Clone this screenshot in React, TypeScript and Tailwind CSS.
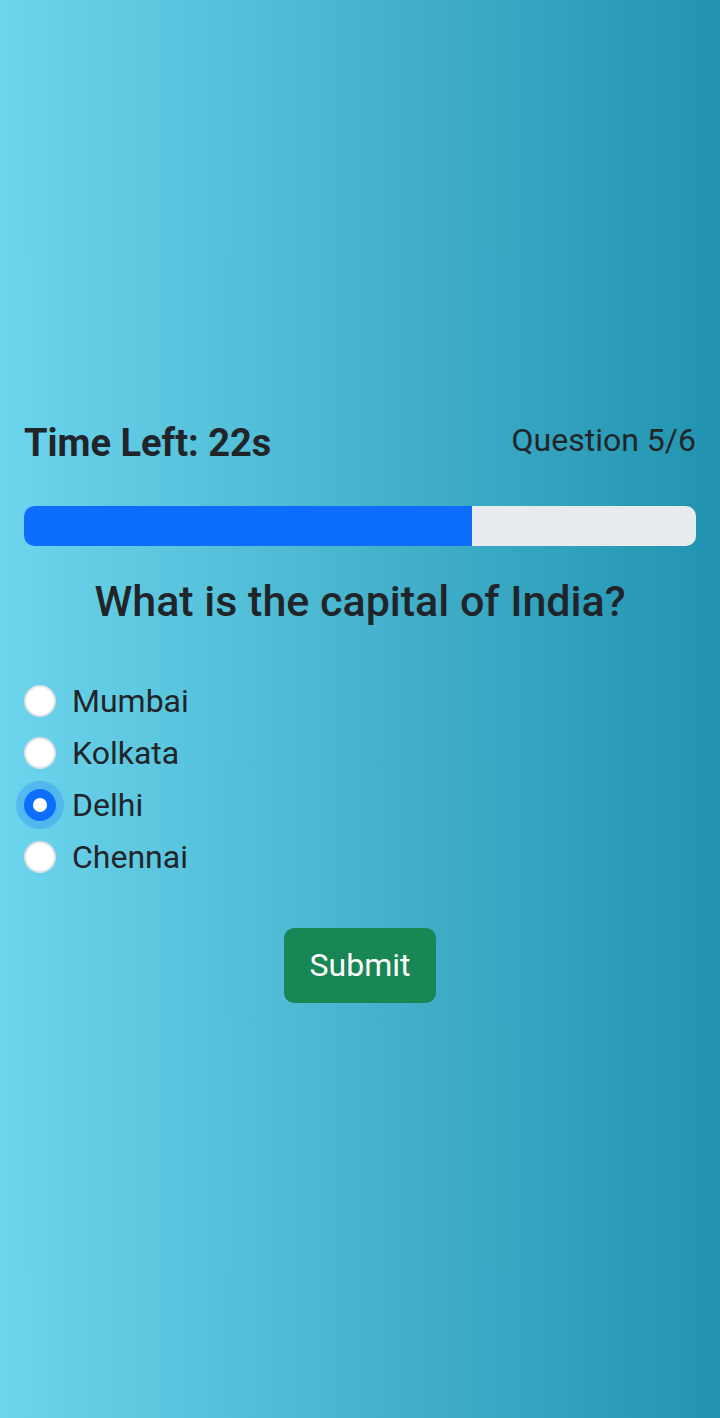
const options = ["Mumbai", "Kolkata", "Delhi", "Chennai"];

export default function App() {
  const selected = "Delhi";
  const current = 5;
  const total = 6;
  const progress = ((current - 1) / total) * 100;

  return (
    <div
      className="min-h-screen w-full flex items-center bg-[linear-gradient(to_right,#6dd5ed,#2193b0)] text-[#212529]"
      style={{ fontFamily: "Roboto, 'Liberation Sans', sans-serif" }}
    >
      <div className="w-full px-6 pt-2 pb-1">
        <div className="flex justify-between items-start">
          <h5 className="text-[38px] font-bold leading-[43px] pt-[2px]">Time Left: 22s</h5>
          <span className="text-[32px] leading-[40px]">
            Question {current}/{total}
          </span>
        </div>

        <div className="mt-[41px] h-10 w-full rounded-[10px] bg-[#e9ecef] overflow-hidden flex">
          <div className="h-full bg-[#0d6efd]" style={{ width: `${progress}%` }}></div>
        </div>

        <h3 className="mt-[29px] mb-[49px] text-center text-[43px] font-medium leading-[53px]">
          What is the capital of India?
        </h3>

        <div className="flex flex-col">
          {options.map((opt) => {
            const checked = opt === selected;
            return (
              <label key={opt} className="flex items-center h-12 mb-1 text-[32px] leading-[1.5]">
                {checked ? (
                  <span className="w-8 h-8 rounded-full bg-[#0d6efd] flex items-center justify-center shadow-[0_0_0_8px_rgba(13,110,253,0.25)] border-2 border-[#0d6efd]">
                    <span className="w-[14px] h-[14px] rounded-full bg-white"></span>
                  </span>
                ) : (
                  <span className="w-8 h-8 rounded-full bg-white border-2 border-[#dee2e6]"></span>
                )}
                <span className="ml-[16px]">{opt}</span>
              </label>
            );
          })}
        </div>

        <div className="mt-[43px] flex justify-center">
          <button className="h-[75px] px-[26px] rounded-[10px] bg-[#198754] text-white text-[32px] leading-[1.5]">
            Submit
          </button>
        </div>
      </div>
    </div>
  );
}
